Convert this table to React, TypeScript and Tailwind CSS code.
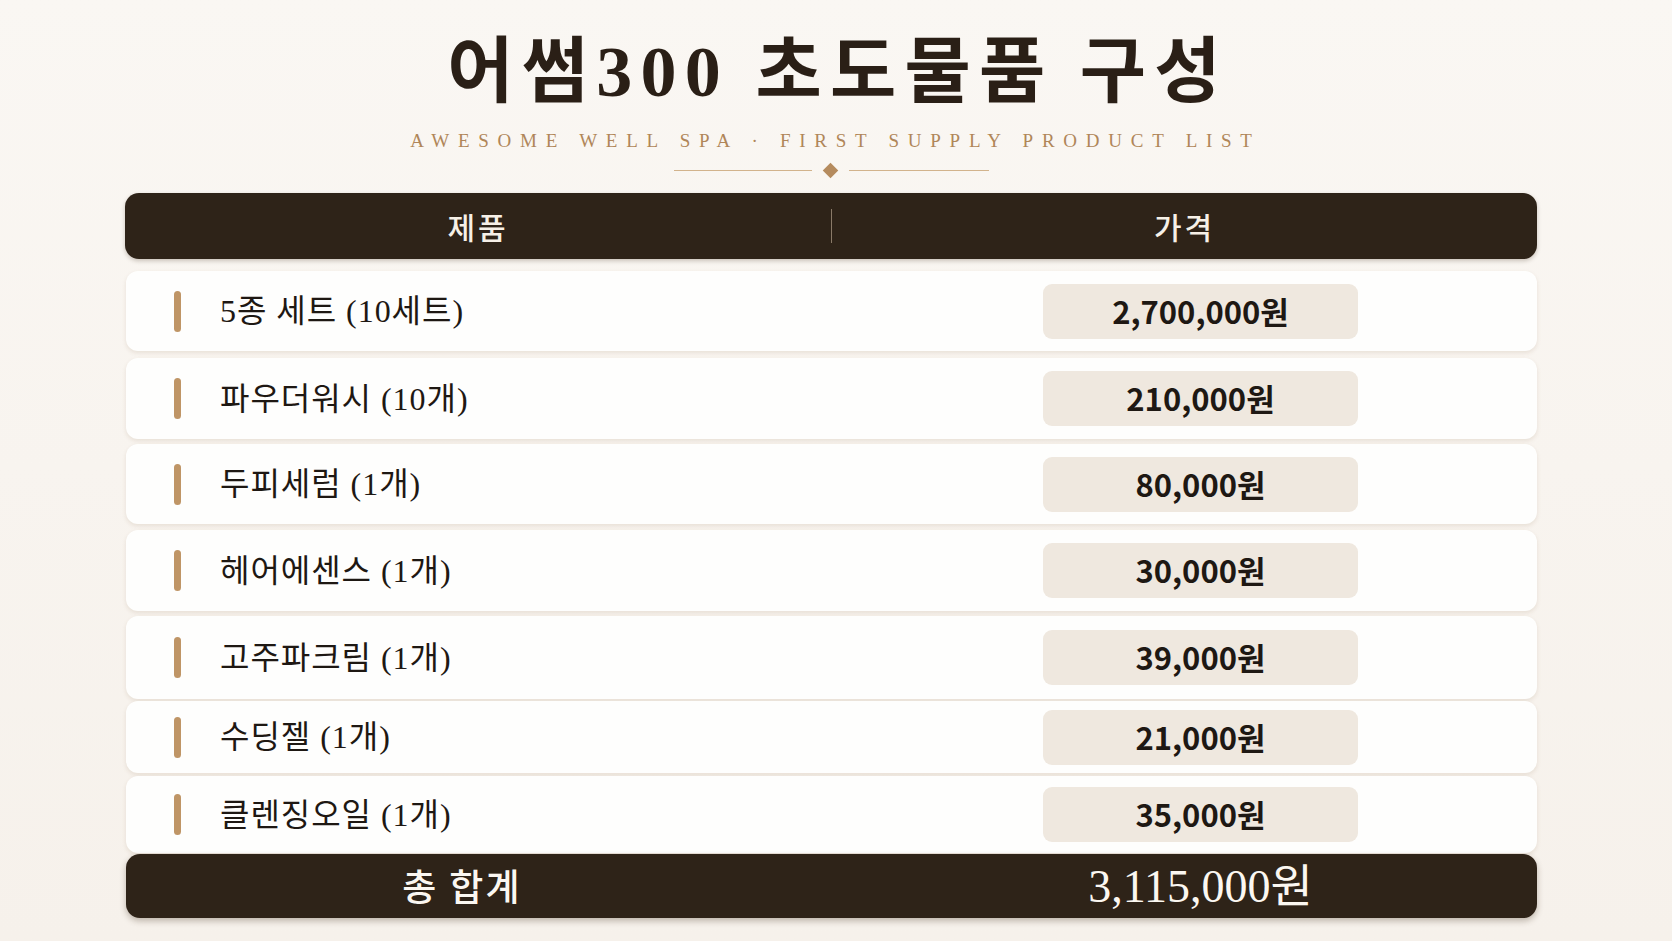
import React from "react";

type Row = { name: string; price: string; h: string; mt: string };

const rows: Row[] = [
  { name: "5종 세트 (10세트)", price: "2,700,000원", h: "h-[80px]", mt: "mt-[12px]" },
  { name: "파우더워시 (10개)", price: "210,000원", h: "h-[81px]", mt: "mt-[7px]" },
  { name: "두피세럼 (1개)", price: "80,000원", h: "h-[80px]", mt: "mt-[5px]" },
  { name: "헤어에센스 (1개)", price: "30,000원", h: "h-[81px]", mt: "mt-[6px]" },
  { name: "고주파크림 (1개)", price: "39,000원", h: "h-[83px]", mt: "mt-[5px]" },
  { name: "수딩젤 (1개)", price: "21,000원", h: "h-[72px]", mt: "mt-[2px]" },
  { name: "클렌징오일 (1개)", price: "35,000원", h: "h-[77px]", mt: "mt-[3px]" },
];

export default function App() {
  return (
    <div className="w-full h-[941px] overflow-hidden bg-gradient-to-b from-[#faf7f3] to-[#f6f1eb] font-['Liberation_Serif','Noto_Sans_CJK_KR',serif]">
      <div className="w-[1412px] ml-[125px] flex flex-col">
        {/* Title */}
        <div className="pt-[28px] flex justify-center">
          <h1 className="text-[72px] leading-[88px] font-bold tracking-[0.115em] text-[#2a1f16] pl-[14px]">
            어썸300 초도물품 구성
          </h1>
        </div>
        {/* Subtitle */}
        <div className="mt-[13px] flex justify-center">
          <p className="text-[19px] leading-[24px] tracking-[0.46em] pl-[9px] text-[#b08659]">
            AWESOME WELL SPA · FIRST SUPPLY PRODUCT LIST
          </p>
        </div>
        {/* Divider */}
        <div className="mt-[9px] flex items-center justify-center gap-[13px] h-[16px]">
          <div className="w-[138px] h-px bg-[#d2b38c]" />
          <div className="w-[11px] h-[11px] rotate-45 bg-[#b58b5e]" />
          <div className="w-[140px] h-px bg-[#d2b38c]" />
        </div>

        {/* Header */}
        <div className="mt-[15px] h-[66px] rounded-[14px] bg-[#2e2318] shadow-[0_2px_4px_rgba(60,40,20,0.25)] flex items-center text-[#f6f0e7] font-['Noto_Sans_CJK_KR',sans-serif]">
          <div className="w-[706px] text-center text-[30px] tracking-[0.1em] font-medium">제품</div>
          <div className="w-px h-[34px] bg-[#8a7a68]" />
          <div className="flex-1 text-center text-[30px] tracking-[0.1em] font-medium">가격</div>
        </div>

        {/* Rows */}
        {rows.map((r) => (
          <div
            key={r.name}
            className={`${r.mt} ${r.h} ml-px rounded-[12px] bg-[#fefefd] shadow-[0_2px_4px_rgba(150,120,90,0.16)] flex items-center`}
          >
            <div className="w-[706px] flex items-center pl-[48px]">
              <div className="w-[7px] h-[41px] rounded-full bg-[#bf9566]" />
              <span className="ml-[39px] text-[32px] tracking-[0.03em] text-[#1e1813]">{r.name}</span>
            </div>
            <div className="flex-1 flex items-center pl-[211px]">
              <div className="w-[315px] h-[55px] rounded-[9px] bg-[#efe8df] flex items-center justify-center">
                <span className="font-['Noto_Sans_CJK_KR',sans-serif] font-semibold text-[31px] text-[#1e1813]">
                  {r.price}
                </span>
              </div>
            </div>
          </div>
        ))}

        {/* Total */}
        <div className="mt-px ml-px h-[64px] rounded-[14px] bg-[#2e2318] shadow-[0_3px_6px_rgba(60,40,20,0.3)] flex items-center text-[#fbf7f1]">
          <div className="w-[706px] flex justify-center pr-[34px]">
            <span className="font-['Noto_Sans_CJK_KR',sans-serif] font-medium text-[37px] tracking-[0.06em]">총 합계</span>
          </div>
          <div className="flex-1 flex items-center pl-[211px]">
            <div className="w-[315px] text-center text-[46px]">3,115,000원</div>
          </div>
        </div>
      </div>
    </div>
  );
}
